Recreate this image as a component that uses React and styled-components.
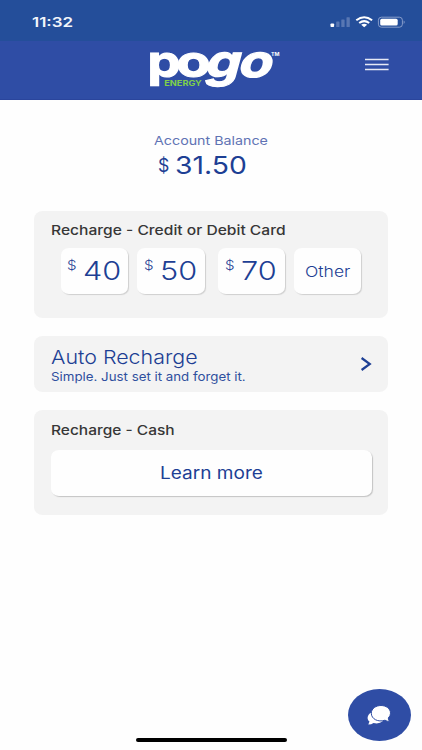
import React from "react";
import styled, { createGlobalStyle } from "styled-components";

const GlobalStyle = createGlobalStyle`
    * { box-sizing: border-box; }
    body {
        margin: 0;
        background-color: #fefefe;
        font-family: Inter, "Liberation Sans", sans-serif;
    }
    button {
        font-family: inherit;
        border: none;
        padding: 0;
        cursor: pointer;
    }
`;

const Screen = styled.div`
    position: relative;
    display: flex;
    flex-direction: column;
    height: 750px;
    overflow: hidden;
`;

const StatusBar = styled.div`
    display: flex;
    justify-content: space-between;
    align-items: center;
    height: 41px;
    padding: 2px 17px 0 32px;
    background-color: #244e9a;
`;

const StatusIcons = styled.svg`
    width: 76px;
    height: 14px;
`;

const Header = styled.header`
    display: flex;
    justify-content: space-between;
    align-items: flex-start;
    height: 59px;
    padding: 8px 33px 0 148px;
    background-color: #2f4da5;
    border-bottom: 1px solid #2a459c;
`;

const Logo = styled.svg`
    width: 136px;
    height: 42px;
    overflow: visible;
`;

const MenuButton = styled.button`
    width: 24px;
    height: 14px;
    margin-top: 9px;
    background: none;
    & svg { display: block; }
`;

/* The app's type is wider than Inter, so each label is stretched from its left edge */
const Label = styled.span`
    display: block;
    width: max-content;
    white-space: nowrap;
    line-height: ${({ $line }) => $line || 20}px;
    font-size: ${({ $size }) => $size}px;
    font-weight: ${({ $weight }) => $weight || 400};
    color: ${({ $color }) => $color || "#1d3f94"};
    transform: scaleX(${({ $stretch }) => $stretch || 1.18});
    transform-origin: left center;
`;

const Balance = styled.section`
    height: 110.5px;
    padding: 31px 0 0 154px;
`;

const Amount = styled.div`
    display: flex;
    padding: 2px 0 0 4px;
    & > :first-child { width: 17px; }
`;

const Card = styled.section`
    height: ${({ $height }) => $height}px;
    margin: 0 34px 18.3px;
    padding: ${({ $top }) => $top || 9.5}px 16px 0 17px;
    border-radius: 9px / 8px;
    background-color: #f3f3f3;
`;

const Options = styled.div`
    display: flex;
    margin: 8px 0 0 9.5px;
`;

const Tile = styled.button`
    display: flex;
    width: 67.5px;
    height: 45.5px;
    margin-right: ${({ $gap }) => $gap || 0}px;
    padding-left: ${({ $left }) => $left}px;
    border-radius: 8px / 7px;
    background-color: #fefefe;
    box-shadow: 1px 1px 1px #cfcfcf;
    & > :nth-child(2) { margin-left: 8px; }
`;

const LinkCard = styled(Card)`
    display: flex;
    justify-content: space-between;
`;

const Chevron = styled.svg`
    width: 12px;
    height: 16px;
    margin-top: 9px;
`;

const WideButton = styled.button`
    display: block;
    width: 321px;
    height: 46px;
    margin-top: 10.5px;
    padding-left: 108.5px;
    border-radius: 8px / 7px;
    background-color: #fefefe;
    box-shadow: 1px 1px 1px #c4c4c4;
`;

const ChatButton = styled.button`
    position: absolute;
    left: 347.5px;
    top: 688.8px;
    width: 63px;
    height: 52px;
    border-radius: 50%;
    background-color: #2f4da5;
    & svg { display: block; }
`;

const HomeIndicator = styled.div`
    position: absolute;
    left: 136px;
    bottom: 8px;
    width: 151px;
    height: 4.5px;
    border-radius: 3px;
    background-color: #000;
`;

const amounts = [
    { value: "40", left: 6.5, gap: 9 },
    { value: "50", left: 6.5, gap: 13 },
    { value: "70", left: 7.5, gap: 8.5 },
];

export default function App() {
    return (
        <Screen>
            <GlobalStyle />
            <StatusBar>
                <Label $size={13.6} $line={22} $weight={600} $color="#f2f5fb" $stretch={1.25}>11:32</Label>
                <StatusIcons viewBox="0 0 76 14">
                    <rect x="1.5" y="8.5" width="3.6" height="3.5" rx="0.8" fill="#fff" />
                    <g fill="#5877b3">
                        <rect x="7.2" y="6.5" width="3.3" height="5.5" rx="0.6" />
                        <rect x="12.3" y="4.4" width="3.3" height="7.6" rx="0.6" />
                        <rect x="17.5" y="2.2" width="3.3" height="9.8" rx="0.6" />
                    </g>
                    <g fill="none" stroke="#fff" strokeWidth="2">
                        <path d="M27.3 5.3Q35.2 -0.9 43.1 5.3" />
                        <path d="M30.2 8Q35.2 4.2 40.2 8" />
                    </g>
                    <path d="M32.2 9.7Q35.2 7.7 38.2 9.7L35.2 12.2Z" fill="#fff" />
                    <rect x="49.4" y="2.2" width="24" height="10" rx="3" fill="none" stroke="#91a5cf" strokeWidth="0.9" />
                    <rect x="51.2" y="3.8" width="17.5" height="6.8" rx="1.6" fill="#fff" />
                    <path d="M74.7 5.5Q76.6 7.2 74.7 8.9Z" fill="#91a5cf" />
                </StatusIcons>
            </StatusBar>

            <Header>
                <Logo viewBox="0 0 136 42" fontFamily="Inter, sans-serif">
                    <g fill="#fff" stroke="#fff" strokeWidth="1.2" fontSize="44.5" fontWeight="700">
                        <text transform="translate(-0.5 28.4) scale(1.18 1)">p</text>
                        <text transform="translate(28.5 28.4) scale(1.25 1)">o</text>
                        <text transform="translate(55.5 28.4) skewX(-15) scale(1.24 1)">g</text>
                        <text transform="translate(88.5 28.4) skewX(-15) scale(1.24 1)">o</text>
                    </g>
                    <text x="16.3" y="37.3" fontSize="7.8" fontWeight="700" fill="#7ed04b" textLength="37.5" lengthAdjust="spacingAndGlyphs">ENERGY</text>
                    <text x="123" y="7.3" fontSize="4.8" fontWeight="700" fill="#fff" textLength="8.5" lengthAdjust="spacingAndGlyphs">TM</text>
                </Logo>
                <MenuButton aria-label="Menu">
                    <svg width="24" height="14" viewBox="0 0 24 14">
                        <path d="M0 1.5H23.6M0 6.5H23.6M0 11.5H23.6" stroke="#e6e9f5" strokeWidth="1.6" />
                    </svg>
                </MenuButton>
            </Header>

            <Balance>
                <Label $size={12.2} $color="#6073b4" $stretch={1.17}>Account Balance</Label>
                <Amount>
                    <Label $size={18} $line={26} $stretch={0.98}>$</Label>
                    <Label $size={24} $line={26}>31.50</Label>
                </Amount>
            </Balance>

            <Card $height={107.5}>
                <Label $size={13.2} $weight={500} $color="#373737" $stretch={1.183}>Recharge - Credit or Debit Card</Label>
                <Options>
                    {amounts.map(({ value, left, gap }) =>
                        <Tile key={value} $left={left} $gap={gap}>
                            <Label $size={12.8} $line={35} $weight={300}>$</Label>
                            <Label $size={26} $line={46} $weight={300}>{value}</Label>
                        </Tile>
                    )}
                    <Tile $left={11}>
                        <Label $size={15} $line={47} $weight={300} $stretch={1.17}>Other</Label>
                    </Tile>
                </Options>
            </Card>

            <LinkCard $height={55.5} $top={11}>
                <div>
                    <Label $size={19.3} $weight={300} $stretch={1.11}>Auto Recharge</Label>
                    <Label $size={11.8} $color="#2f4f9e" $stretch={1.127}>Simple. Just set it and forget it.</Label>
                </div>
                <Chevron viewBox="0 0 12 16">
                    <path d="M1.6 2L9.8 8L1.6 14" fill="none" stroke="#1d3f94" strokeWidth="2.2" />
                </Chevron>
            </LinkCard>

            <Card $height={104.5}>
                <Label $size={13.2} $weight={500} $color="#373737" $stretch={1.175}>Recharge - Cash</Label>
                <WideButton>
                    <Label $size={16.8} $stretch={1.135}>Learn more</Label>
                </WideButton>
            </Card>

            <ChatButton aria-label="Chat">
                <svg width="63" height="52" viewBox="0 0 63 52">
                    <path d="M25 23C19.8 24 17.8 30 21.5 32.5L20.3 35.5Q23.5 35.5 25.5 34Q31 35.5 35 32Z" fill="#fff" />
                    <path d="M33 16.5C38 16.5 42.5 19.6 42.5 24.2Q42.5 27 40.3 29Q40.3 31 41.7 32.5Q38.8 32.5 37 31.2C30 33.5 23.3 30 23.3 24.2C23.3 19.6 28 16.5 33 16.5Z" fill="#fff" stroke="#2f4da5" strokeWidth="1" />
                </svg>
            </ChatButton>
            <HomeIndicator />
        </Screen>
    );
}
